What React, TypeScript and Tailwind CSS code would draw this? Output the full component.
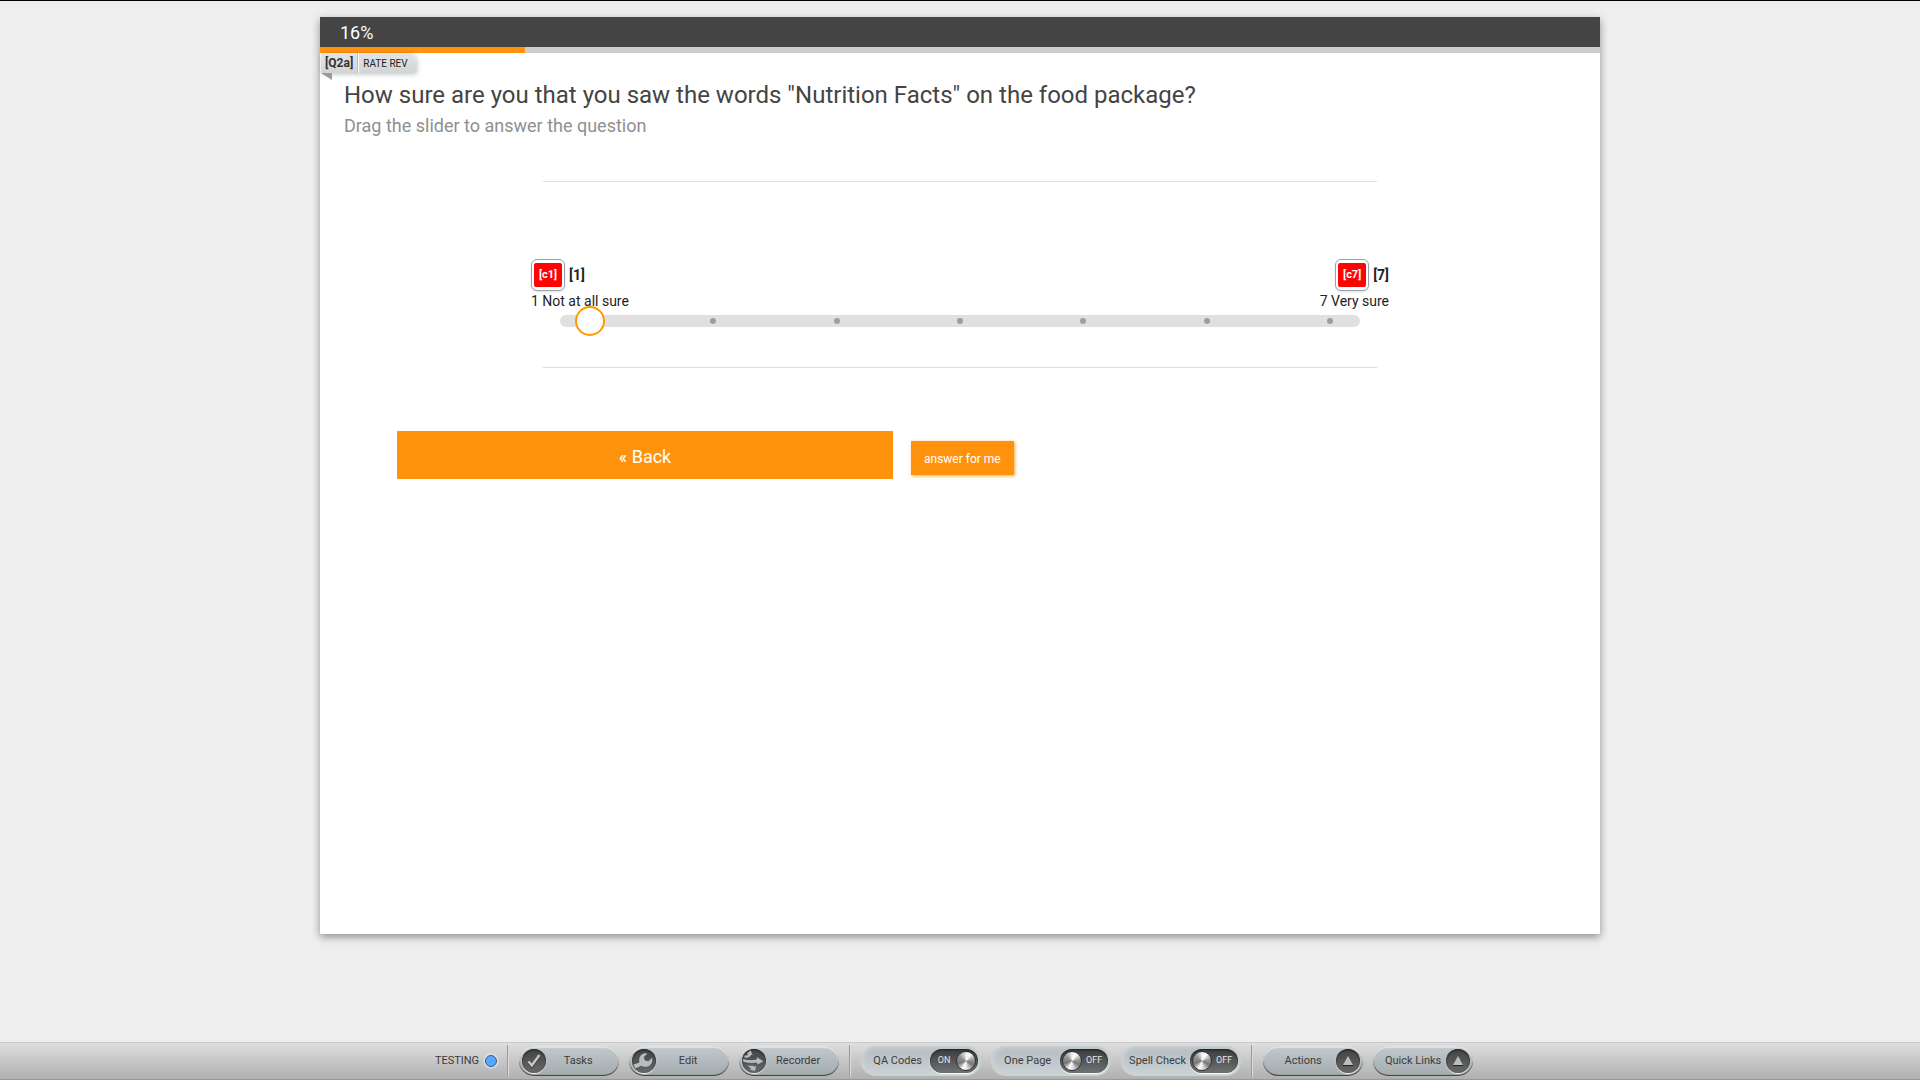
import { useState } from 'react';
import type { ReactNode } from 'react';

const STEPS = [1, 2, 3, 4, 5, 6, 7];

// Small red QA code shown next to each end of the scale.
function CodeBadge({ code, value }: { code: string; value: number }) {
  return (
    <div className="flex items-center gap-1">
      <span className="flex h-8 w-[34px] items-center justify-center rounded-md border border-gray-400 bg-white shadow-sm">
        <span className="flex h-6 w-7 items-center justify-center rounded-xs bg-[#ff0404] text-[11px] font-bold text-white">
          [{code}]
        </span>
      </span>
      <span className="text-[14px] font-bold">[{value}]</span>
    </div>
  );
}

function RoundIcon({ children }: { children: ReactNode }) {
  return (
    <span className="flex size-6 shrink-0 items-center justify-center rounded-full bg-linear-to-b from-[#444444] to-[#686868] shadow-[inset_0_1px_2px_#222,0_1px_1px_#f4f6f7]">
      {children}
    </span>
  );
}

function CheckIcon() {
  return (
    <svg viewBox="0 0 24 24" className="size-6" fill="none" aria-hidden="true">
      <path d="M6.5 13.5 9.8 17.5 17.5 7" stroke="#2c2c2c" strokeWidth="2.6" />
      <path d="M6.5 12.5 9.8 16.5 17.5 6" stroke="#c3c8ca" strokeWidth="2.4" />
    </svg>
  );
}

function WrenchIcon() {
  return (
    <svg viewBox="0 0 24 24" className="size-6" aria-hidden="true">
      <path
        d="M.8 15.4 7 13.2C5.8 8.8 8.6 4.4 13.4 3.8L16 4.6 12.2 8 13.2 11.2 16.6 11.8 20.2 8.2C22 12.8 19 17.8 14 18.2 12 18.4 10.6 17.8 9.6 17L3.2 20Z"
        fill="#b6bcbf"
        stroke="#333"
        strokeWidth=".5"
      />
    </svg>
  );
}

function RecorderIcon() {
  return (
    <svg viewBox="0 0 24 24" className="size-6" fill="#b6bcbf" aria-hidden="true">
      <path d="M.8 9.4C5 11 9.6 11 14.4 10.2V7.4L22.2 12.4 14.8 16.4V14C9.6 14.8 5 14.4 .8 13Z" stroke="#333" strokeWidth=".6" />
      <path d="M2.6 6.4C4.4 6.8 5.6 6.4 6.2 5.2L4.8 4.8 8.6 1.2 10.6 6 9 5.8C8.4 8.4 5.6 9.4 2.4 8.6Z" />
      <path d="M5.8 16.2C7.6 17 9.4 16.8 10.6 16.4L12.2 17.8 14.4 16.8 12.8 22 7.6 20.2 9.4 19.2C8.2 18.8 6.6 17.8 5.8 16.2Z" />
    </svg>
  );
}

function ArrowUpIcon() {
  return (
    <svg viewBox="0 0 24 24" className="size-6" aria-hidden="true">
      <path d="M12 7 17 16H7Z" fill="#b9bec0" />
      <path d="M7 16.5H17" stroke="#222" />
    </svg>
  );
}

const PILL =
  'flex h-[30px] w-[100px] items-center rounded-full bg-linear-to-b from-[#c3cacd] to-[#a3abae] px-[3px] shadow-[inset_0_2px_1px_#dde3e6,inset_0_-1px_1px_#3c3c3c]';

const SWITCH =
  'flex h-6 w-12 items-center rounded-full bg-linear-to-b from-[#3c3c3c] to-[#707474] px-[2px] shadow-[inset_0_1px_2px_#222,0_1px_1px_#fff]';

function ToolButton({ label, icon }: { label: string; icon: ReactNode }) {
  return (
    <button type="button" className={PILL}>
      <RoundIcon>{icon}</RoundIcon>
      <span className="flex-1 pr-[6px] text-center">{label}</span>
    </button>
  );
}

function MenuButton({ label }: { label: string }) {
  return (
    <button type="button" className={PILL} aria-haspopup="menu">
      <span className="flex-1 pl-1 text-center whitespace-nowrap">{label}</span>
      <RoundIcon>
        <ArrowUpIcon />
      </RoundIcon>
    </button>
  );
}

function ToolSwitch({ label, initial }: { label: string; initial: boolean }) {
  const [on, setOn] = useState(initial);
  return (
    <label className="flex h-[30px] w-[120px] cursor-pointer items-center rounded-full bg-linear-to-b from-[#b4bcc0] to-[#cbd3d7] pr-[3px] shadow-[inset_0_0_4px_2px_#ccd4d8]">
      <span className="flex-1 pl-1 text-center whitespace-nowrap">{label}</span>
      <input type="checkbox" className="sr-only" checked={on} onChange={(e) => setOn(e.target.checked)} />
      {/* The knob sits on the right when on, on the left when off. */}
      <span className={on ? SWITCH : SWITCH + ' flex-row-reverse'}>
        <span className="flex-1 text-center text-[9px] text-gray-200">{on ? 'ON' : 'OFF'}</span>
        <span className="size-5 rounded-full border border-[#333] bg-[conic-gradient(#eee,#fff_30deg,#999_80deg,#777_120deg,#ddd_170deg,#fff_200deg,#777_250deg,#999_310deg,#eee)]" />
      </span>
    </label>
  );
}

function Separator() {
  return <span className="h-8 w-[2px] border-l border-[#999] bg-[#dcdcdc]" />;
}

export default function App() {
  const [answer, setAnswer] = useState(1);

  return (
    <div className="flex min-h-screen flex-col border-t border-black bg-[#eee] font-['Roboto',sans-serif] text-[#222]">
      <main className="mx-auto mt-4 min-h-[calc(100vh-163px)] w-full max-w-[1280px] bg-white shadow-[0_3px_8px_rgba(0,0,0,0.4)]">
        <header>
          <div className="flex h-[30px] items-center bg-[#444] px-5 text-[18px] text-white">16%</div>
          <div className="h-[6px] bg-[#ccc]" role="progressbar" aria-valuenow={16} aria-label="Progress">
            <div className="h-full w-[16%] bg-[#ff930e]" />
          </div>
        </header>

        <div className="flex flex-col items-start px-px">
          <div className="flex h-5 items-stretch rounded-tr-lg bg-linear-to-b from-[#e4e4e4] to-[#d2d5d5] shadow-[1px_1px_5px_rgba(0,0,0,0.25)]">
            <span className="flex items-center border-r border-[#bbb] px-1 text-[12px] font-bold text-[#333]">[Q2a]</span>
            <span className="flex items-center border-l border-white pr-2 pl-1 text-[10px]">RATE REV</span>
          </div>
          <svg viewBox="0 0 11 7" className="h-[7px] w-[11px]" aria-hidden="true">
            <path d="M0 0H11V7Z" fill="#999" />
          </svg>
        </div>

        <form className="px-5" onSubmit={(e) => e.preventDefault()}>
          <div className="px-1">
            <h1 className="text-[24px] leading-[30px] text-[#444]">
              How sure are you that you saw the words "Nutrition Facts" on the food package?
            </h1>
            <p className="mt-1 text-[18px] leading-6 text-[#909090]">Drag the slider to answer the question</p>
          </div>

          <section className="mx-auto mt-[43px] max-w-[858px]">
            <hr className="mx-3 border-[#ddd]" />
            <div className="mt-[77px] flex justify-between text-[14px]">
              <div>
                <CodeBadge code="c1" value={1} />
                <p className="leading-5">1 Not at all sure</p>
              </div>
              <div className="flex flex-col items-end">
                <CodeBadge code="c7" value={7} />
                <p className="leading-5">7 Very sure</p>
              </div>
            </div>
            <div className="relative mx-auto mt-1 flex h-3 max-w-[800px] items-center justify-between rounded-full bg-[#e0e0e0] px-[27px]">
              {STEPS.map((step) => (
                <span key={step} className="size-[6px] rounded-full bg-[#9e9e9e]" />
              ))}
              <input
                type="range"
                aria-label="How sure are you"
                min={1}
                max={7}
                value={answer}
                onChange={(e) => setAnswer(Number(e.target.value))}
                className="absolute inset-x-[15px] -top-[9px] h-[30px] appearance-none bg-transparent [&::-webkit-slider-thumb]:size-[30px] [&::-webkit-slider-thumb]:appearance-none [&::-webkit-slider-thumb]:rounded-full [&::-webkit-slider-thumb]:border-2 [&::-webkit-slider-thumb]:border-[#ff9800] [&::-webkit-slider-thumb]:bg-white"
              />
            </div>
            <hr className="mx-3 mt-10 border-[#ddd]" />
          </section>

          <div className="mt-[63px] ml-[57px] flex items-center gap-[18px] text-white">
            <button type="button" className="h-12 w-[42%] max-w-[496px] bg-[#ff930e] pt-[2px] text-[18px]">
              « Back
            </button>
            <button
              type="button"
              className="mt-[6px] h-[34px] bg-[#ff930e] px-[13px] pt-px text-[12px] shadow-[1px_1px_3px_rgba(255,147,14,0.8)]"
            >
              answer for me
            </button>
          </div>
        </form>
      </main>

      <footer className="mt-auto flex h-[38px] items-center justify-center gap-[10px] border-t border-b border-t-[#c8c8c8] border-b-[#999] bg-linear-to-b from-[#dedede] to-[#b0b0b0] pr-3 text-[11px] text-[#3c3c3c]">
        <span className="flex items-center gap-[6px]">
          TESTING
          <span className="size-3 rounded-full border border-[#345a80] bg-[#55a7ff] shadow-[0_0_2px_1px_#eee]" />
        </span>
        <Separator />
        <ToolButton label="Tasks" icon={<CheckIcon />} />
        <ToolButton label="Edit" icon={<WrenchIcon />} />
        <ToolButton label="Recorder" icon={<RecorderIcon />} />
        <Separator />
        <ToolSwitch label="QA Codes" initial={true} />
        <ToolSwitch label="One Page" initial={false} />
        <ToolSwitch label="Spell Check" initial={false} />
        <Separator />
        <MenuButton label="Actions" />
        <MenuButton label="Quick Links" />
      </footer>
    </div>
  );
}
